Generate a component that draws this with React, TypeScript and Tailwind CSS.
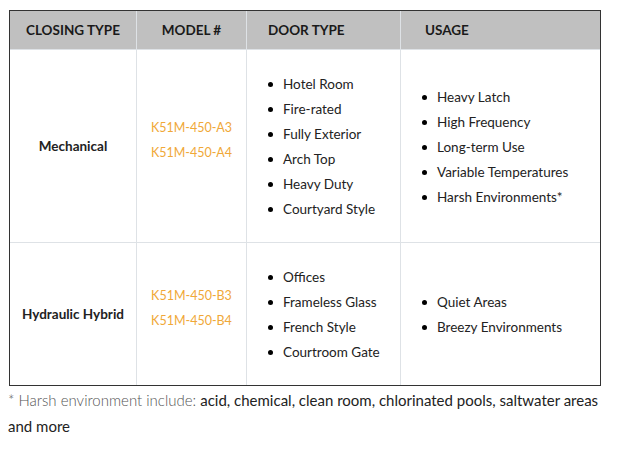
import React from 'react';

type Row = {
  closing: string;
  models: string[];
  doors: string[];
  usage: string[];
};

const ROWS: Row[] = [
  {
    closing: 'Mechanical',
    models: ['K51M-450-A3', 'K51M-450-A4'],
    doors: ['Hotel Room', 'Fire-rated', 'Fully Exterior', 'Arch Top', 'Heavy Duty', 'Courtyard Style'],
    usage: ['Heavy Latch', 'High Frequency', 'Long-term Use', 'Variable Temperatures', 'Harsh Environments*'],
  },
  {
    closing: 'Hydraulic Hybrid',
    models: ['K51M-450-B3', 'K51M-450-B4'],
    doors: ['Offices', 'Frameless Glass', 'French Style', 'Courtroom Gate'],
    usage: ['Quiet Areas', 'Breezy Environments'],
  },
];

const Bullets: React.FC<{ items: string[] }> = ({ items }) => (
  <ul className="flex flex-col pt-[2px]">
    {items.map(item => (
      <li key={item} className="flex items-center h-[25px]">
        <span className="w-[5px] h-[5px] rounded-full bg-black ml-[21px] mr-[10px] shrink-0" />
        <span>{item}</span>
      </li>
    ))}
  </ul>
);

const App: React.FC = () => {
  return (
    <div
      className="w-[619px] h-[455px] bg-white text-[#222] pt-[10px] pl-[9px]"
      style={{ fontFamily: 'Lato, "Open Sans", sans-serif' }}
    >
      {/* Product table */}
      <div className="w-[592px] border border-[#333]">
        <div className="grid grid-cols-[127px_110px_154px_199px] bg-[#c0c0c0] h-[39px] border-b border-[#dee2e6] text-[13.5px] font-bold text-[#1a1a1a]">
          <div className="flex items-center justify-center border-r border-[#dee2e6]">CLOSING TYPE</div>
          <div className="flex items-center justify-center border-r border-[#dee2e6]">MODEL #</div>
          <div className="flex items-center pl-[21px] border-r border-[#dee2e6]">DOOR TYPE</div>
          <div className="flex items-center pl-[24px]">USAGE</div>
        </div>

        {ROWS.map((row, i) => (
          <div
            key={row.closing}
            className={`grid grid-cols-[127px_110px_154px_199px] text-[13.5px] ${i === 0 ? 'h-[193px] border-b border-[#dee2e6]' : 'h-[142px]'}`}
          >
            <div className="flex items-center justify-center pt-[1px] font-bold border-r border-[#dee2e6]">
              {row.closing}
            </div>
            <div className="flex flex-col items-center justify-center pb-[10px] text-[12.5px] text-[#f0a838] border-r border-[#dee2e6]">
              {row.models.map(m => (
                <div key={m} className="h-[25px] flex items-center">{m}</div>
              ))}
            </div>
            <div className="flex items-center border-r border-[#dee2e6]">
              <Bullets items={row.doors} />
            </div>
            <div className="flex items-center">
              <Bullets items={row.usage} />
            </div>
          </div>
        ))}
      </div>

      {/* Footnote */}
      <p className="text-[15px] leading-[26px] mt-[1px] -ml-[1px] w-[608px]">
        <span className="font-light text-[#555]">* Harsh environment include: </span>
        acid, chemical, clean room, chlorinated pools, saltwater areas and more
      </p>
    </div>
  );
};

export default App;
